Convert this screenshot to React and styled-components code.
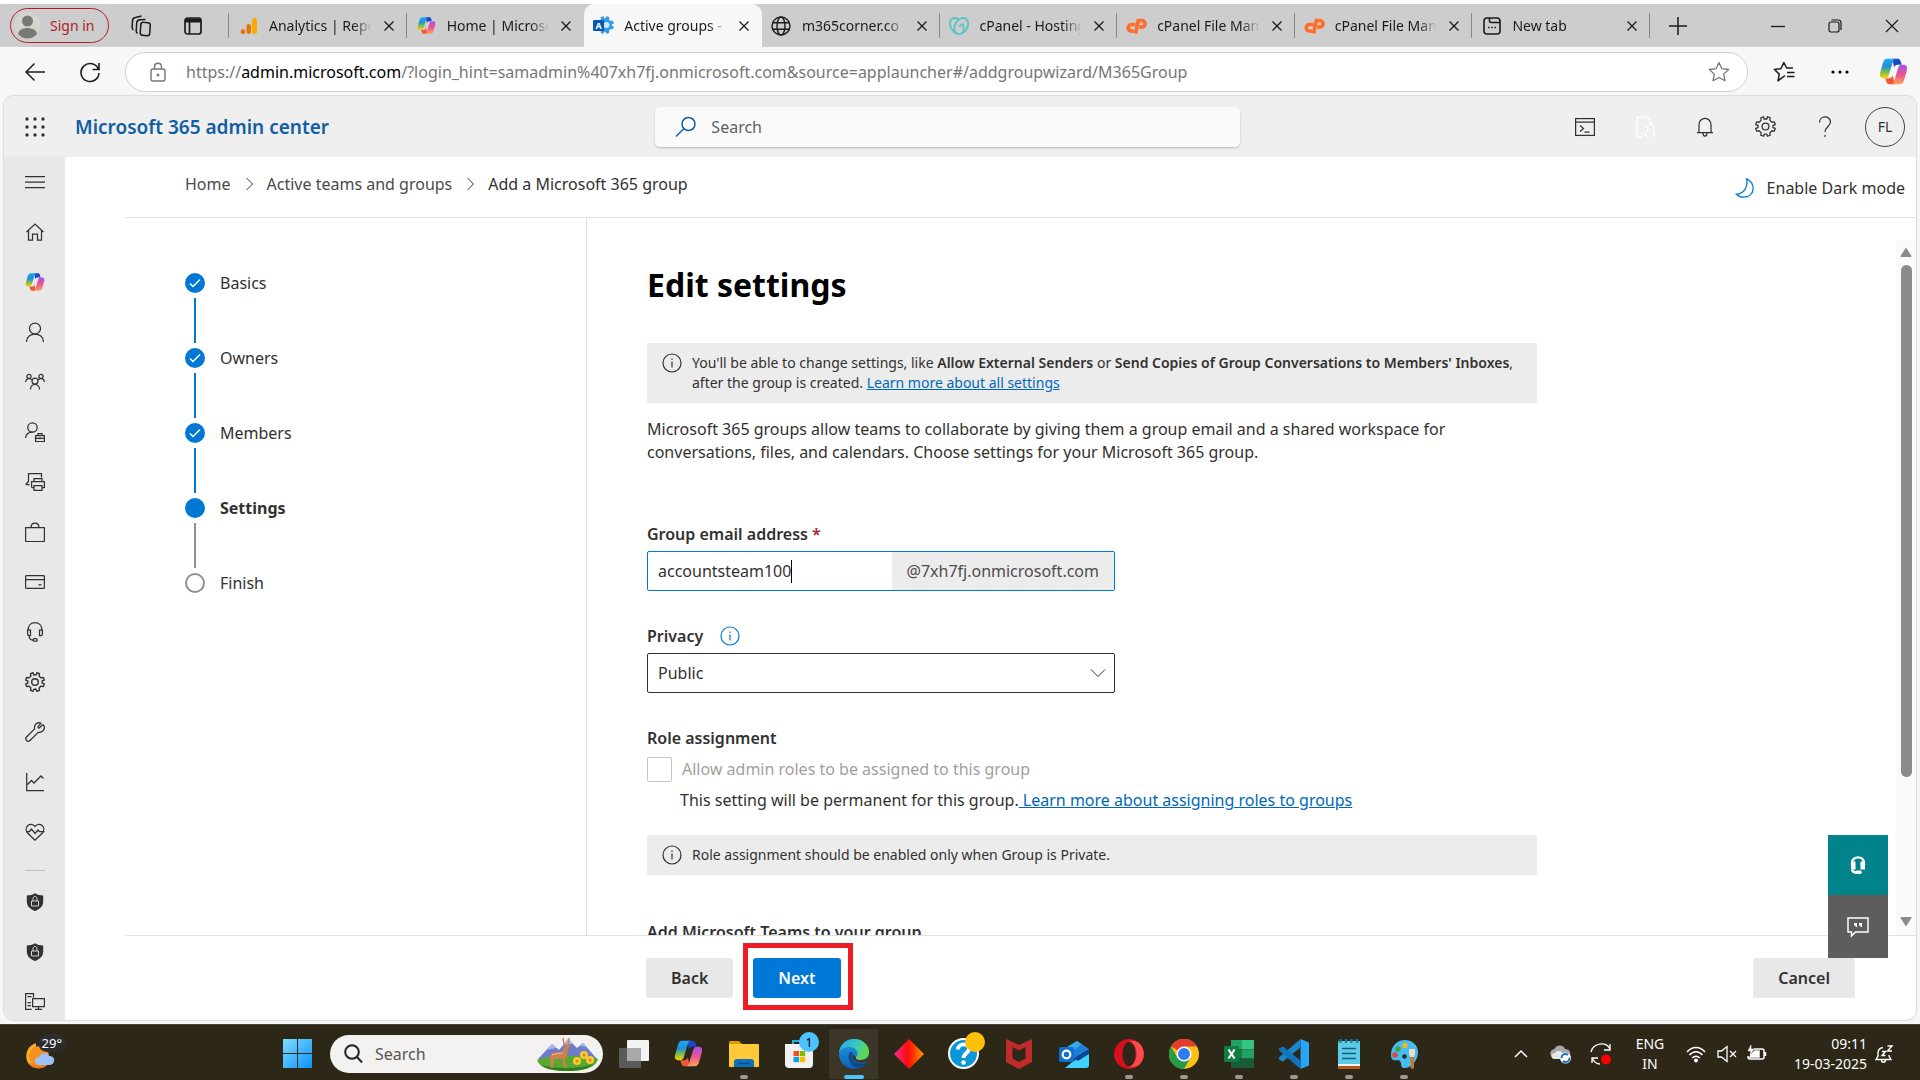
import React, { useId } from 'react';
import styled, { createGlobalStyle, css } from 'styled-components';
import { SiGodaddy } from 'react-icons/si';

const GlobalStyle = createGlobalStyle`
  * { box-sizing: border-box; }
  body {
    margin: 0;
    background: #f7f7f7;
    color: #323130;
    font-family: 'Noto Sans', 'Open Sans', sans-serif;
    font-size: 16px;
  }
  button, input, select { font: inherit; color: inherit; }
  svg { display: block; flex: none; }
  h1, p, ol, ul { margin: 0; padding: 0; }
`;

/* ---------- icons ---------- */

const Line = ({ size = 20, w = 1.25, box = 20, children, ...rest }) => (
  <svg width={size} height={size} viewBox={`0 0 ${box} ${box}`} fill="none" stroke="currentColor" strokeWidth={w} aria-hidden="true" {...rest}>
    {children}
  </svg>
);

const Art = ({ size = 28, box = 28, children }) => (
  <svg width={size} height={size} viewBox={`0 0 ${box} ${box}`} aria-hidden="true">{children}</svg>
);

const CopilotIcon = ({ size = 20 }) => {
  const id = useId().replace(/[^a-zA-Z0-9]/g, '');
  return (
    <Art size={size} box={24}>
      <defs>
        <linearGradient id={`${id}a`} x1="0" y1="0" x2="0" y2="1">
          <stop offset="0" stopColor="#21a7f0" />
          <stop offset=".4" stopColor="#1f8fd8" />
          <stop offset=".65" stopColor="#6cbb5a" />
          <stop offset="1" stopColor="#ffd000" />
        </linearGradient>
        <linearGradient id={`${id}b`} x1="0" y1="0" x2="0" y2="1">
          <stop offset="0" stopColor="#a64ff0" />
          <stop offset=".5" stopColor="#e9568d" />
          <stop offset="1" stopColor="#ffa15c" />
        </linearGradient>
      </defs>
      <path d="M11 1.500h4.500c1.300 0 2 .8 2.400 2l.9 3h-3.500c-1.500 0-2.300.8-2.800 2.300z" fill="#1a49c8" />
      <path d="M13 22.500H8.500c-1.300 0-2-.8-2.400-2l-.9-3h3.500c1.500 0 2.300-.8 2.800-2.300z" fill="#f1573a" />
      <path d="M6.800 1.500H14c-1.400 0-2 1-2.500 2.500L8.300 14.500c-.7 2.100-1.500 3-3.300 3H3.800C.9 17.500.2 15.400 1 12.800l2.300-8C4 2.500 5 1.500 6.800 1.500z" fill={`url(#${id}a)`} />
      <path d="M17.200 22.500H10c1.400 0 2-1 2.500-2.500l3.200-10.500c.7-2.100 1.500-3 3.300-3h1.200c2.900 0 3.600 2.100 2.800 4.700l-2.300 8c-.7 2.300-1.700 3.300-3.500 3.300z" fill={`url(#${id}b)`} />
    </Art>
  );
};

const CpanelIcon = () => (
  <Line size={21} box={21} w={3.6} stroke="#ff6c2c">
    <path d="M9.500 9.500H5.500a3.200 3.200 0 000 6.600h2.300" />
    <path d="M9.500 18.500L12.300 5.500h3.500a3.300 3.300 0 010 6.600h-2.500" />
  </Line>
);

const GEAR = 'M8.300 1.500l.5 2 1.200-.2 1.200.2.5-2 2.400.9-.4 2.100 1.800 1.800 2.100-.4.900 2.400-2 .7v2l2 .7-.900 2.400-2.100-.4-1.800 1.800.4 2.100-2.400.9-.7-1.900h-2l-.7 1.900-2.400-.9.400-2.100-1.800-1.800-2.100.4-.9-2.400 2-.7V9l-2-.7.9-2.400 2.100.4 1.800-1.800-.4-2.100z';

const GearIcon = (props) => (
  <Line {...props} strokeLinejoin="round"><path d={GEAR} /><circle cx="10" cy="10" r="3" /></Line>
);

const InfoIcon = ({ size = 20 }) => (
  <Line size={size} w={1.2}>
    <circle cx="10" cy="10" r="9" />
    <path d="M10 8.500v6" /><path d="M10 5.500v1.400" />
  </Line>
);

const CloseIcon = ({ size = 12 }) => (
  <Line size={size} box={12} w={1.3}><path d="M1.500 1.500l9 9M10.500 1.500l-9 9" /></Line>
);

const ChevronIcon = () => <Line size={14} box={14} w={1}><path d="M4.500 1l6 6-6 6" /></Line>;

const ShieldLock = () => (
  <Art size={20} box={20}>
    <path d="M10 1.200c2.400 1.600 5 2.200 8.200 2.300v5.700c0 4.700-3 7.800-8.200 9.800-5.200-2-8.200-5.100-8.200-9.800V3.500C5 3.400 7.600 2.800 10 1.200z" fill="#323130" />
    <path d="M6.500 9h7v5h-7zM8 9V6.800c0-3.200 4-3.200 4 0V9" fill="none" stroke="#e8e8e8" strokeWidth=".9" />
  </Art>
);

const navIcons = [
  ['Home', <Line><path d="M1.500 10L10 2l8.500 8M3.500 8.500V18h4v-6h5v6h4V8.500" /></Line>],
  ['Copilot', <CopilotIcon />],
  ['Users', <Line><circle cx="10" cy="6.500" r="5.500" /><path d="M1.500 20c0-10.500 17-10.500 17 0" /></Line>],
  ['Teams & groups', <Line><circle cx="10" cy="9" r="3" /><circle cx="4" cy="4.500" r="2.100" /><circle cx="16" cy="4.500" r="2.100" /><path d="M5.500 17.500c0-7 9-7 9 0M.6 10c0-4 4.400-4.500 6.200-1.800M19.400 10c0-4-4.400-4.500-6.200-1.800" /></Line>],
  ['Roles', <Line><circle cx="7.500" cy="5.500" r="4.700" /><path d="M.6 16c.4-4.200 3.500-6 7-6M10.600 13.500h8.800v6h-8.800zM13 13.500v-2h4v2M10.600 16.300h8.800M15 15.300v2" /></Line>],
  ['Devices', <Line><path d="M3.500 10.500V1.600h13v4M.6 12.500h4M.6 12.500l2.900-3M9 9V6.600h8V9M6.600 15.500V9.500h12.800v6h-2.500M9 13.500h8v4.900H9zM6.600 15.500H9" /></Line>],
  ['Marketplace', <Line><path d="M.6 5.600h18.800v12.900a1 1 0 01-1 1H1.600a1 1 0 01-1-1zM6 5.600c0-6 8-6 8 0" /></Line>],
  ['Billing', <Line><rect x=".6" y="3.600" width="18.800" height="12.800" rx="1" /><path d="M.6 7.500h18.800M13.500 12.800h3" /></Line>],
  ['Support', <Line><path d="M3 8.500C3 3.500 6 .7 10 .7s7 2.800 7 7.800M2.600 8h2.900v5.500H4.200a1.600 1.600 0 01-1.600-1.600zM17.400 8h-2.900v5.500h1.300a1.600 1.600 0 001.600-1.600zM4 13.500c0 3.500 1.500 4.500 4 4.500" /><rect x="8" y="16.600" width="4.300" height="2.600" rx="1.300" /></Line>],
  ['Settings', <GearIcon size={22} />],
  ['Setup', <Line strokeLinejoin="round"><path d="M17.500 2.700L14 6.200l-1.200-1.400L16 1.200C12.500-.3 8.800 2.500 9.600 6.900L1.500 15c-2 2.500 1 5.700 3.500 3.500l8.200-8.100c4.500.7 7.300-3.500 5.600-7z" /></Line>],
  ['Reports', <Line><path d="M1.700 1v17.500H19M2.500 12.500l4-4 2.500 2.500L16 4l2.500 2.500" /></Line>],
  ['Health', <Line><path d="M10 18.200L2.600 11C-2 5.500 5.500-1.200 10 4.400c4.500-5.600 12 1.100 7.400 6.600zM1 9.500h3.500l2-2.500 3.500 4.500 3-3.500 1.500 1.500h5" /></Line>],
];

/* ---------- browser chrome ---------- */

const Screen = styled.div`
  display: flex;
  flex-direction: column;
  height: 100vh;
  border-top: 4px solid #fff;
`;

const IconButton = styled.button`
  display: grid;
  place-items: center;
  width: ${(p) => p.$w || 32}px;
  height: 40px;
  padding: 0;
  border: 0;
  background: none;
  color: ${(p) => p.$color || 'inherit'};
`;

const divider = css`
  background: linear-gradient(#888, #888) right center / 1px 25px no-repeat;
`;

const TabStrip = styled.div`
  display: flex;
  align-items: center;
  height: 43px;
  padding-left: 10px;
  background: #cdcdcd;
  color: #1b1b1b;
`;

const SignIn = styled.button`
  display: flex;
  align-items: center;
  gap: 9px;
  width: 99px;
  height: 35px;
  padding: 0 3px;
  border: 1px solid #b01e24;
  border-radius: 18px;
  background: none;
  color: #b01e24;
  font-size: 14px;
`;

const StripTools = styled.div`
  display: flex;
  justify-content: center;
  gap: 20px;
  width: 120px;
  padding-right: 4px;
  ${divider}
`;

const Tabs = styled.div`
  display: grid;
  grid-template-columns: repeat(8, minmax(0, 1fr));
  flex: 0 1 1421px;
  align-self: stretch;
`;

const Tab = styled.div`
  display: flex;
  align-items: center;
  gap: 10px;
  min-width: 0;
  padding: 0 11px 0 9px;
  font-size: 14px;
  ${(p) => p.$divider && divider}
  ${(p) => p.$active && css`
    border-radius: 10px 10px 0 0;
    background: #f7f7f7;
  `}
`;

const TabIcon = styled.span`
  display: grid;
  flex: none;
  place-items: center;
  width: 21px;
`;

const TabTitle = styled.span`
  flex: 1;
  overflow: hidden;
  white-space: nowrap;
  mask-image: linear-gradient(90deg, #000 82%, transparent);
`;

const TabClose = styled.button`
  display: grid;
  place-items: center;
  width: 14px;
  height: 20px;
  padding: 0;
  border: 0;
  background: none;
`;

const WindowControls = styled.div`
  display: flex;
  margin-left: auto;
`;

const AddressRow = styled.div`
  display: flex;
  align-items: center;
  height: 49px;
  padding: 0 2px 0 7px;
  color: #1b1b1b;
`;

const AddressBar = styled.div`
  display: flex;
  align-items: center;
  flex: 1;
  gap: 18px;
  height: 40px;
  margin: 0 8px;
  padding: 0 12px 0 22px;
  border: 1px solid #cfcfcf;
  border-radius: 20px;
  background: #fff;
  color: #767676;
  b { font-weight: 400; color: #000; }
`;

const Url = styled.div`
  flex: 1;
  overflow: hidden;
  white-space: nowrap;
`;

const tabs = [
  {
    title: 'Analytics | Repo',
    icon: <Art size={18} box={18}><rect x="12" y="1" width="5" height="16" rx="2.500" fill="#f9ab00" /><rect x="6.500" y="7" width="4.500" height="10" rx="2.200" fill="#e37400" /><circle cx="3" cy="14.700" r="2.400" fill="#e8710a" /></Art>,
    divider: true,
  },
  { title: 'Home | Microso', icon: <CopilotIcon size={19} /> },
  {
    title: 'Active groups -',
    active: true,
    icon: (
      <Art size={21} box={21}>
        <g transform="translate(2 0)" fill="#2b9fe6" stroke="#1c78cf" strokeWidth=".5"><path d={GEAR} /></g>
        <circle cx="13.500" cy="10" r="3" fill="#cfe9fa" />
        <rect x="0" y="5" width="11" height="11" rx="1" fill="#0b58b4" />
        <text x="5.500" y="14" fontSize="9" fontWeight="700" textAnchor="middle" fill="#fff">A</text>
      </Art>
    ),
  },
  {
    title: 'm365corner.co',
    divider: true,
    icon: <Line w={1.4}><circle cx="10" cy="10" r="9" /><ellipse cx="10" cy="10" rx="4" ry="9" /><path d="M1.800 6.800h16.400M1.800 13.200h16.400" /></Line>,
  },
  { title: 'cPanel - Hosting', icon: <SiGodaddy size={20} color="#58c3c9" />, divider: true },
  { title: 'cPanel File Man', icon: <CpanelIcon />, divider: true },
  { title: 'cPanel File Man', icon: <CpanelIcon />, divider: true },
  {
    title: 'New tab',
    divider: true,
    icon: <Line size={18} box={18} w={1.6}><rect x="1" y="1" width="16" height="16" rx="3" /><path d="M6.500 1v3a1.500 1.500 0 001.500 1.500h9M5 10.500h1.500M8.300 10.500h1.500M11.500 10.500H13" /></Line>,
  },
];

function Browser() {
  return (
    <>
      <TabStrip>
        <SignIn>
          <Art size={27} box={27}>
            <circle cx="13.500" cy="13.500" r="13" fill="#d6d4cf" />
            <circle cx="13.500" cy="9" r="5.500" fill="#7b7873" />
            <path d="M4 22c1-8 18-8 19 0-5 6-14 6-19 0z" fill="#7b7873" />
          </Art>
          Sign in
        </SignIn>
        <StripTools>
          <IconButton aria-label="Workspaces">
            <Line size={22} box={22} w={1.5}>
              <rect x="10.500" y="7.500" width="9.500" height="13" rx="2.500" transform="rotate(4 15 14)" />
              <path d="M7.500 18.500c-1-.6-1.300-1.300-1.300-2.500L6.700 8a3.500 3.500 0 013.300-3.300l5.500-.2M3.500 15c-.9-.6-1.300-1.500-1.400-2.500L2.500 6A3.500 3.500 0 015.500 2.500L11.500 1" />
            </Line>
          </IconButton>
          <IconButton aria-label="Tab actions">
            <Line size={18} box={18} w={1.700}><rect x="1" y="1" width="16" height="16" rx="2.500" /><path d="M1 3.500h16" strokeWidth="4" /><path d="M5.500 5v12" /></Line>
          </IconButton>
        </StripTools>
        <Tabs>
          {tabs.map((t, i) => (
            <Tab key={i} $active={t.active} $divider={t.divider}>
              <TabIcon>{t.icon}</TabIcon>
              <TabTitle>{t.title}</TabTitle>
              <TabClose aria-label="Close tab"><CloseIcon /></TabClose>
            </Tab>
          ))}
        </Tabs>
        <IconButton $w={56} aria-label="New tab"><Line size={18} box={18} w={1.5}><path d="M9 0v18M0 9h18" /></Line></IconButton>
        <WindowControls>
          <IconButton $w={57} aria-label="Minimize"><Line size={14} box={14} w={1.3}><path d="M0 7.500h14" /></Line></IconButton>
          <IconButton $w={57} aria-label="Restore"><Line size={14} box={14} w={1.2}><rect x="1" y="3" width="10" height="10" rx="2" /><path d="M3.500 1h7A2.500 2.500 0 0113 3.500V11" /></Line></IconButton>
          <IconButton $w={57} aria-label="Close"><Line size={14} box={14} w={1.2}><path d="M1 1l12 12M13 1L1 13" /></Line></IconButton>
        </WindowControls>
      </TabStrip>
      <AddressRow>
        <IconButton $w={56} aria-label="Back"><Line size={20} w={1.5}><path d="M20 10H1M9.500 1.500L1 10l8.500 8.500" /></Line></IconButton>
        <IconButton $w={54} aria-label="Refresh"><Line size={22} box={22} w={1.600}><path d="M19.500 8.500A9 9 0 1020 12M20 2v6.500h-6.500" /></Line></IconButton>
        <AddressBar>
          <Line size={20} w={1.4}><rect x="3" y="7" width="14" height="12" rx="2" /><path d="M6.500 7V5c0-5 7-5 7 0v2" /><circle cx="10" cy="13" r=".8" fill="currentColor" /></Line>
          <Url role="textbox" aria-label="Address" tabIndex={0}>
            https://<b>admin.microsoft.com</b>/?login_hint=samadmin%407xh7fj.onmicrosoft.com&amp;source=applauncher#/addgroupwizard/M365Group
          </Url>
          <IconButton aria-label="Favorite this page"><Line size={22} box={22} w={1.3} strokeLinejoin="round"><path d="M11 1.500l2.900 6.200 6.700.8-4.900 4.600 1.300 6.700-6-3.300-6 3.300 1.300-6.700L1.400 8.500l6.700-.8z" /></Line></IconButton>
        </AddressBar>
        <IconButton $w={56} aria-label="Favorites"><Line size={22} box={22} w={1.500} strokeLinejoin="round"><path d="M12 14.500L5 19.800l1.300-6.700L1.400 8.500l6.500-.8L10.800 1.500l2.900 5.500H20M14 11.500h7.500M14 15.500h7.500" /></Line></IconButton>
        <IconButton $w={56} aria-label="More"><Art size={18} box={18}><circle cx="2" cy="9" r="1.600" /><circle cx="9" cy="9" r="1.600" /><circle cx="16" cy="9" r="1.600" /></Art></IconButton>
        <IconButton $w={50} aria-label="Copilot"><CopilotIcon size={29} /></IconButton>
      </AddressRow>
    </>
  );
}

/* ---------- admin center ---------- */

const Frame = styled.div`
  position: relative;
  display: flex;
  flex: 1;
  flex-direction: column;
  min-height: 0;
  margin: 0 4px 4px;
  overflow: hidden;
  border-radius: 10px;
  background: #fff;
  box-shadow: 0 0 1px 1px #dcdcdc;
`;

const SuiteHeader = styled.header`
  display: grid;
  grid-template-columns: 49fr 585px 50fr;
  align-items: center;
  height: 61px;
  padding-right: 11px;
  background: #efefef;
`;

const Brand = styled.div`
  display: flex;
  align-items: center;
  gap: 9px;
  a {
    color: #115ea3;
    font-size: 19px;
    font-weight: 600;
    text-decoration: none;
  }
`;

const SearchBox = styled.label`
  display: flex;
  align-items: center;
  gap: 12px;
  height: 40px;
  padding: 0 20px;
  border-radius: 5px;
  background: #fafafa;
  box-shadow: 0 1px 2px #b8b8b8;
  color: #115ea3;
  input {
    flex: 1;
    border: 0;
    outline: 0;
    background: none;
    color: #616161;
  }
  input::placeholder { color: #616161; opacity: 1; }
`;

const HeaderTools = styled.div`
  display: flex;
  justify-content: flex-end;
  align-items: center;
`;

const Avatar = styled.button`
  width: 40px;
  height: 40px;
  margin-left: 10px;
  padding: 0;
  border: 1px solid #424242;
  border-radius: 50%;
  background: none;
  font-size: 14px;
`;

const Body = styled.div`
  display: flex;
  flex: 1;
  min-height: 0;
`;

const Sidebar = styled.nav`
  flex: none;
  width: 61px;
  overflow: hidden;
  background: #e8e8e8;
`;

const NavItem = styled.button`
  display: grid;
  place-items: center;
  width: 100%;
  height: 50px;
  padding: 0;
  border: 0;
  background: none;
`;

const NavDivider = styled.hr`
  width: 20px;
  height: 1px;
  margin: 13px auto 6px;
  border: 0;
  background: #c0c0c0;
`;

const Main = styled.main`
  display: flex;
  flex: 1;
  flex-direction: column;
  min-width: 0;
  padding-left: 60px;
`;

const TopRow = styled.div`
  display: flex;
  justify-content: space-between;
  height: 61px;
  padding: 15px 11px 0 60px;
  border-bottom: 1px solid #e1e1e1;
`;

const Breadcrumb = styled.nav`
  display: flex;
  align-items: center;
  gap: 11px;
  height: 24px;
  a { color: #4a4a4a; text-decoration: none; }
`;

const DarkToggle = styled.button`
  display: flex;
  align-items: center;
  gap: 12px;
  height: 32px;
  padding: 0;
  border: 0;
  background: none;
`;

const Wizard = styled.div`
  display: flex;
  flex: 1;
  min-height: 0;
`;

const Steps = styled.ol`
  flex: none;
  width: 462px;
  padding: 55px 0 0 60px;
  border-right: 1px solid #e1e1e1;
  list-style: none;
`;

const Step = styled.li`
  display: grid;
  grid-template-columns: 20px 1fr;
  grid-template-rows: 20px 45px;
  gap: 5px 15px;
  align-items: center;
  margin-bottom: 5px;
  font-weight: ${(p) => (p.$current ? 700 : 400)};
  &::after {
    content: '';
    justify-self: center;
    width: 2px;
    height: 100%;
    background: ${(p) => (p.$last ? 'none' : p.$done ? '#0078d4' : '#8f8f8f')};
  }
`;

const Content = styled.div`
  flex: 1;
  min-width: 0;
  overflow: hidden;
  padding: 43px 0 0 60px;
`;

const Title = styled.h1`
  color: #000;
  font-size: 32px;
  font-weight: 700;
  line-height: 48px;
`;

const Notice = styled.div`
  display: flex;
  gap: 10px;
  max-width: 890px;
  margin-top: ${(p) => p.$top}px;
  padding: 10px 15px;
  background: #ececec;
  font-size: 14px;
  line-height: 20px;
  white-space: nowrap;
  b { font-weight: 600; }
`;

const Link = styled.a`
  color: #0068b8;
  text-decoration: underline;
`;

const Intro = styled.p`
  max-width: 870px;
  margin-top: 15px;
  line-height: 23px;
`;

const Label = styled.label`
  display: block;
  font-weight: 600;
  line-height: 20px;
`;

const Required = styled.span`
  color: #a4262c;
`;

const Field = styled.div`
  display: flex;
  flex-direction: column;
  gap: 7px;
  max-width: 468px;
  margin-top: ${(p) => p.$top}px;
`;

const LabelRow = styled.div`
  display: flex;
  align-items: center;
  gap: 17px;
  color: #0078d4;
  label { color: #323130; }
`;

const EmailBox = styled.div`
  display: flex;
  height: 40px;
  border: 1px solid #0078d4;
  border-radius: 2px;
`;

const EmailName = styled.div`
  display: flex;
  align-items: center;
  flex: 1;
  padding-left: 10px;
  input {
    field-sizing: content;
    padding: 0;
    border: 0;
    outline: 0;
    background: none;
    caret-color: transparent;
  }
`;

const Caret = styled.span`
  width: 1px;
  height: 23px;
  background: #000;
`;

const Suffix = styled.span`
  padding: 0 15px;
  background: #ececec;
  color: #4f4d4b;
  line-height: 38px;
`;

const SelectBox = styled.div`
  display: grid;
  align-items: center;
  select, svg { grid-area: 1 / 1; }
  select {
    appearance: none;
    width: 100%;
    height: 40px;
    padding: 0 10px;
    border: 1px solid #323130;
    border-radius: 2px;
    background: #fff;
  }
  svg {
    justify-self: end;
    margin-right: 9px;
    pointer-events: none;
  }
`;

const CheckRow = styled.label`
  display: flex;
  align-items: center;
  gap: 10px;
  height: 26px;
  margin-top: 8px;
  color: #a19f9d;
  input {
    appearance: none;
    width: 25px;
    height: 25px;
    margin: 0;
    border: 1px solid #c8c6c4;
    border-radius: 2px;
  }
`;

const Hint = styled.p`
  margin-top: 6px;
  padding-left: 33px;
  line-height: 24px;
`;

const Scrollbar = styled.div`
  display: flex;
  flex-direction: column;
  align-items: center;
  gap: 7px;
  width: 20px;
  margin-top: 22px;
  padding: 6px 0 7px;
  background: #fafafa;
`;

const Thumb = styled.div`
  flex: 0 0 75%;
  width: 11px;
  margin-bottom: auto;
  border-radius: 6px;
  background: #8b8b8b;
`;

const Footer = styled.footer`
  display: flex;
  align-items: center;
  height: 85px;
  padding: 0 61px 0 521px;
  border-top: 1px solid #e1e1e1;
`;

const Highlight = styled.div`
  margin: 0 auto 3px 10px;
  padding: 10px 7px 7px 5px;
  border: 5px solid #ee1c25;
`;

const Button = styled.button`
  display: block;
  height: 40px;
  padding: 0 25px;
  border: 0;
  border-radius: 3px;
  background: ${(p) => (p.$primary ? '#0078d7' : '#e8e8e8')};
  color: ${(p) => (p.$primary ? '#fff' : '#323130')};
  font-weight: 600;
`;

const FloatingTools = styled.div`
  position: absolute;
  right: 28px;
  bottom: 62px;
  width: 60px;
`;

const FloatButton = styled.button`
  display: grid;
  place-items: center;
  width: 100%;
  height: ${(p) => (p.$help ? 60 : 63)}px;
  padding: 0;
  border: 0;
  background: ${(p) => (p.$help ? '#00838a' : '#5f5d5c')};
  color: #fff;
`;

const steps = [
  { name: 'Basics', done: true },
  { name: 'Owners', done: true },
  { name: 'Members', done: true },
  { name: 'Settings', current: true },
  { name: 'Finish' },
];

const StepDot = ({ done, current }) => (
  <Art size={20} box={20}>
    {done || current ? <circle cx="10" cy="10" r="10" fill="#0078d4" /> : <circle cx="10" cy="10" r="9" fill="#fff" stroke="#8f8f8f" strokeWidth="2" />}
    {done && <path d="M5 10.500l3 3L15 6.500" fill="none" stroke="#fff" strokeWidth="1.500" />}
  </Art>
);

function AdminHeader() {
  return (
    <SuiteHeader>
      <Brand>
        <IconButton $w={62} aria-label="App launcher">
          <Art size={20} box={20}>
            {[2, 10, 18].map((y) => [2, 10, 18].map((x) => <circle key={`${x}-${y}`} cx={x} cy={y} r="1.700" fill="#323130" />))}
          </Art>
        </IconButton>
        <a href="#home">Microsoft 365 admin center</a>
      </Brand>
      <SearchBox>
        <Line size={22} box={22} w={1.500}><circle cx="13.500" cy="8" r="6.500" /><path d="M9 12.500L1 20.500" /></Line>
        <input type="text" placeholder="Search" aria-label="Search" />
      </SearchBox>
      <HeaderTools>
        <IconButton $w={60} aria-label="Cloud shell"><Line size={20}><rect x=".6" y="1.600" width="18.800" height="16.800" /><path d="M.6 5h18.800M5 8.500l3.500 3-3.500 3M9.500 15h5" /></Line></IconButton>
        <IconButton $w={60} $color="#fff" aria-label="Get mobile app"><Line size={22} box={22}><path d="M9 21H3V1h10l3 3v6M7 18h2M16 6c3 3 4 5 4 9v6M10 12l4-2v4l-3 3 2 4" /></Line></IconButton>
        <IconButton $w={60} aria-label="Notifications"><Line size={20}><path d="M4 15.500V8c0-9 12-9 12 0v7.500M2 15.500h16M8 16c0 4 4 4 4 0" /></Line></IconButton>
        <IconButton $w={60} aria-label="Settings"><GearIcon size={23} w={1.1} /></IconButton>
        <IconButton $w={60} aria-label="Help"><Line size={22} box={22}><path d="M5.500 6.500C5.500-.8 16.500-.8 16.500 6c0 4.500-5.500 4.500-5.500 10M11 19v2" /></Line></IconButton>
        <Avatar>FL</Avatar>
      </HeaderTools>
    </SuiteHeader>
  );
}

function SettingsForm() {
  return (
    <Content>
      <Title>Edit settings</Title>
      <Notice $top={34}>
        <InfoIcon />
        <p>
          You'll be able to change settings, like <b>Allow External Senders</b> or <b>Send Copies of Group Conversations to Members' Inboxes</b>,
          <br />
          after the group is created. <Link href="#settings">Learn more about all settings</Link>
        </p>
      </Notice>
      <Intro>
        Microsoft 365 groups allow teams to collaborate by giving them a group email and a shared workspace for
        <br />
        conversations, files, and calendars. Choose settings for your Microsoft 365 group.
      </Intro>
      <Field $top={60}>
        <Label htmlFor="email">Group email address <Required>*</Required></Label>
        <EmailBox>
          <EmailName><input id="email" type="text" defaultValue="accountsteam100" /><Caret /></EmailName>
          <Suffix>@7xh7fj.onmicrosoft.com</Suffix>
        </EmailBox>
      </Field>
      <Field $top={35}>
        <LabelRow>
          <Label htmlFor="privacy">Privacy</Label>
          <InfoIcon />
        </LabelRow>
        <SelectBox>
          <select id="privacy" defaultValue="Public">
            <option>Public</option>
            <option>Private</option>
          </select>
          <Line size={16} box={16} w={1}><path d="M1 4.500l7 7 7-7" /></Line>
        </SelectBox>
      </Field>
      <Field $top={35}>
        <Label as="div">Role assignment</Label>
      </Field>
      <CheckRow>
        <input type="checkbox" disabled />
        Allow admin roles to be assigned to this group
      </CheckRow>
      <Hint>This setting will be permanent for this group.<Link href="#roles"> Learn more about assigning roles to groups</Link></Hint>
      <Notice $top={23}>
        <InfoIcon />
        <p>Role assignment should be enabled only when Group is Private.</p>
      </Notice>
      <Field $top={47}>
        <Label as="div">Add Microsoft Teams to your group</Label>
      </Field>
    </Content>
  );
}

function AdminCenter() {
  return (
    <Frame>
      <AdminHeader />
      <Body>
        <Sidebar>
          <NavItem aria-label="Menu"><Line><path d="M0 4.500h20M0 10h20M0 15.500h20" /></Line></NavItem>
          {navIcons.map(([name, icon]) => <NavItem key={name} aria-label={name}>{icon}</NavItem>)}
          <NavDivider />
          <NavItem aria-label="Security"><ShieldLock /></NavItem>
          <NavItem aria-label="Compliance"><ShieldLock /></NavItem>
          <NavItem aria-label="Endpoint Manager">
            <Line><path d="M8.500 5.500V1.600H.6v15.800h6M2.500 4.500h4M2.500 10.500H6M2.500 13.500H6M7.600 6.600h11.800v8H7.600zM13.500 14.600v2.800M10 17.400h7" /></Line>
          </NavItem>
        </Sidebar>
        <Main>
          <TopRow>
            <Breadcrumb aria-label="Breadcrumb">
              <a href="#home">Home</a><ChevronIcon />
              <a href="#groups">Active teams and groups</a><ChevronIcon />
              <span>Add a Microsoft 365 group</span>
            </Breadcrumb>
            <DarkToggle>
              <Line size={20} stroke="#0078d4"><path d="M11.500.8c9.500 3.500 9 18.400-3 18.400-3 0-5.500-1.200-7.300-3.200C9 16 13.500 8.500 11.500.8z" /></Line>
              Enable Dark mode
            </DarkToggle>
          </TopRow>
          <Wizard>
            <Steps>
              {steps.map((s, i) => (
                <Step key={s.name} $done={s.done} $current={s.current} $last={i === steps.length - 1}>
                  <StepDot {...s} />
                  <span>{s.name}</span>
                </Step>
              ))}
            </Steps>
            <SettingsForm />
            <Scrollbar>
              <Art size={12} box={12}><path d="M6 1.500L11.500 10a.8.8 0 01-.8 1H1.300a.8.8 0 01-.8-1z" fill="#8b8b8b" /></Art>
              <Thumb />
              <Art size={12} box={12}><path d="M6 10.500L.5 2a.8.8 0 01.8-1h9.400a.8.8 0 01.8 1z" fill="#8b8b8b" /></Art>
            </Scrollbar>
          </Wizard>
          <Footer>
            <Button>Back</Button>
            <Highlight><Button $primary>Next</Button></Highlight>
            <Button>Cancel</Button>
          </Footer>
        </Main>
      </Body>
      <FloatingTools>
        <FloatButton $help aria-label="Help and support">
          <Line size={20} w={2.400}>
            <path d="M4 10V8c0-7.500 12-7.500 12 0v2" />
            <path d="M4 14.500c.5 2.500 2 3 4 3h3.500" />
            <rect x="4" y="7.500" width="2.500" height="6" fill="#fff" strokeWidth="2" />
            <rect x="13.500" y="7.500" width="2.500" height="6" fill="#fff" strokeWidth="2" />
            <path d="M8.500 17.200h3.500" strokeWidth="3.500" strokeLinecap="round" />
          </Line>
        </FloatButton>
        <FloatButton aria-label="Give feedback">
          <Line size={22} box={22} w={1.500}>
            <path d="M1 2h20v14H8.500L4.500 20v-4H1z" />
            <path d="M7 7h3v4H8.500V9.500H7zM12 7h3v4h-1.500V9.500H12z" fill="#fff" stroke="none" />
          </Line>
        </FloatButton>
      </FloatingTools>
    </Frame>
  );
}

/* ---------- taskbar ---------- */

const Bar = styled.div`
  display: flex;
  align-items: center;
  height: 56px;
  padding: 2px 20px 0 24px;
  border-top: 1px solid #45423a;
  background: #2d2718;
  color: #fff;
`;

const Weather = styled.button`
  display: grid;
  width: 42px;
  height: 40px;
  margin-right: 207px;
  padding: 0;
  border: 0;
  background: none;
  svg, span { grid-area: 1 / 1; }
  span {
    align-self: start;
    justify-self: end;
    padding: 0 4px;
    border-radius: 10px;
    background: #2c2c2e;
    font-size: 13px;
    line-height: 18px;
  }
`;

const TaskSearch = styled.label`
  display: flex;
  align-items: center;
  gap: 12px;
  width: 273px;
  height: 38px;
  margin: 0 3px 0 9px;
  padding: 0 5px 0 14px;
  border-radius: 19px;
  background: #f4f2f0;
  color: #222;
  input {
    flex: 1;
    min-width: 0;
    padding: 0;
    border: 0;
    background: none;
  }
  input::placeholder { color: #555; opacity: 1; }
`;

const TaskItem = styled.button`
  position: relative;
  display: grid;
  place-items: center;
  flex: none;
  width: ${(p) => p.$w || 55}px;
  height: 50px;
  padding: 0;
  border: 0;
  border-radius: 6px;
  background: ${(p) => (p.$active ? 'linear-gradient(90deg, transparent 3px, #3b3628 3px, #3b3628 52px, transparent 52px)' : 'none')};
  &::after {
    content: '';
    display: ${(p) => (p.$running ? 'block' : 'none')};
    position: absolute;
    bottom: 0;
    width: ${(p) => (p.$active ? 20 : 8)}px;
    height: 4px;
    border-radius: 2px;
    background: ${(p) => (p.$active ? '#4cc2ff' : '#9d9a93')};
  }
`;

const Badge = styled.span`
  position: absolute;
  top: 3px;
  right: ${(p) => (p.$blank ? 6 : 7)}px;
  width: 20px;
  height: 20px;
  border-radius: 50%;
  background: ${(p) => (p.$blank ? '#ffc107' : '#4cc2ff')};
  color: #000;
  font-size: 13px;
  line-height: 20px;
`;

const Tray = styled.div`
  display: flex;
  align-items: center;
  margin-left: auto;
  font-size: 14px;
  line-height: 20px;
  text-align: center;
`;

const TrayItem = styled.button`
  display: grid;
  place-items: center;
  width: ${(p) => p.$w}px;
  height: 40px;
  padding: 0;
  border: 0;
  background: none;
`;

const Clock = styled.div`
  width: 94px;
  text-align: right;
`;

const apps = [
  { name: 'Task view', icon: <Art size={30} box={30}><rect x="0" y="9" width="22" height="20" rx="1" fill="#5a5a5a" /><rect x="8" y="1" width="22" height="21" rx="1" fill="#f3f3f3" /><rect x="8" y="9" width="14" height="13" fill="#a8a8a8" /></Art> },
  { name: 'Copilot', icon: <CopilotIcon size={29} /> },
  { name: 'File Explorer', running: true, icon: <Art size={30} box={30}><path d="M0 3.500A1.500 1.500 0 011.500 2H10l3 3h15v8H0z" fill="#e09a00" /><rect x="0" y="5" width="30" height="23" rx="1" fill="#ffca3a" /><path d="M5 28v-5a3 3 0 013-3h14a3 3 0 013 3v5z" fill="#0d70bd" /><path d="M9 24.500h12" stroke="#0a4c86" strokeWidth="1.500" /></Art> },
  { name: 'Store', badge: '1', icon: <Art size={30} box={30}><path d="M9 6V2h11" fill="none" stroke="#2fa8ea" strokeWidth="2" /><path d="M1 5h28v20a4 4 0 01-4 4H5a4 4 0 01-4-4z" fill="#f2f2f2" /><path d="M9.500 12H15v5.200H9.500z" fill="#f25022" /><path d="M15.700 12h5.400v5.200h-5.400z" fill="#7fba00" /><path d="M9.500 18H15v5.200H9.500z" fill="#00a4ef" /><path d="M15.700 18h5.400v5.200h-5.400z" fill="#ffb900" /></Art> },
  {
    name: 'Edge', running: true, active: true,
    icon: (
      <Art size={30} box={30}>
        <defs>
          <linearGradient id="edgeTop" x1="0" y1="0" x2="1" y2=".4"><stop offset="0" stopColor="#2aa5e8" /><stop offset=".6" stopColor="#35c9c0" /><stop offset="1" stopColor="#64d84c" /></linearGradient>
          <linearGradient id="edgeSide" x1="0" y1="0" x2="0" y2="1"><stop offset="0" stopColor="#1e9de0" /><stop offset="1" stopColor="#0e5fb4" /></linearGradient>
        </defs>
        <circle cx="15" cy="15" r="15" fill="url(#edgeSide)" />
        <path d="M0 14C1 5 7 0 15 0c9 0 15 6 15 13 0 5-4 8-8.500 8-4 0-5-1.500-4.500-2.800.6-1.200 1.500-2 1.500-4C18.500 11 15 8 10.500 8 5 8 1 11 0 14z" fill="url(#edgeTop)" />
        <path d="M11 13c-3 5-1 12 5 15 5 1.500 10-.5 12.500-5-7 3-14 .5-15.500-4.500-.5-2 0-4 1-5.500z" fill="#0c4a8e" />
        <path d="M28.500 22.500c-6 3-13 .8-15-4-.3-1-.2-2.500.3-3.500l3.200 3.200c-.5 1.300.5 2.800 4.500 2.800 3 0 6-1 8.500-4z" fill="#3b3628" />
      </Art>
    ),
  },
  {
    name: 'Diamond',
    icon: (
      <Art size={30} box={30}>
        <defs><linearGradient id="diamond"><stop offset="0" stopColor="#f0308f" /><stop offset=".45" stopColor="#ff0a10" /><stop offset=".6" stopColor="#ff2a00" /><stop offset="1" stopColor="#ff9a00" /></linearGradient></defs>
        <path d="M15 0l15 15-15 15L0 15z" fill="url(#diamond)" />
      </Art>
    ),
  },
  { name: 'Help', badge: '', icon: <Art size={31} box={31}><circle cx="15.500" cy="15.500" r="14.500" fill="#0a96d8" stroke="#fff" strokeWidth="2" /><path d="M10 11.500c0-7 11-6.500 11-.5 0 4-5.500 4-5.500 9" fill="none" stroke="#fff" strokeWidth="3.800" /><circle cx="15.500" cy="24.500" r="2.300" fill="#fff" /></Art> },
  { name: 'McAfee', icon: <Art size={30} box={30}><path d="M2 0l13 6 13-6v23l-13 7-13-7zm6.500 8v11.500l6.500 3.500 6.500-3.500V8L15 11.500z" fill="#c02b2b" fillRule="evenodd" /></Art> },
  { name: 'Outlook', icon: <Art size={30} box={30}><path d="M5 10L18 2l12 8v10H5z" fill="#1d7fd6" /><path d="M5 10L18 2l5 3.500L10 14z" fill="#3aa7ee" /><path d="M6 29h21a3 3 0 003-3V12L12 24z" fill="#40d3ff" /><path d="M15 19l15-9v5l-11 7z" fill="#0a4694" /><rect x="0" y="8" width="15" height="15" rx="2" fill="#0f6fd1" /><circle cx="7.500" cy="15.500" r="3.800" fill="none" stroke="#fff" strokeWidth="2.200" /></Art> },
  { name: 'Opera', running: true, icon: <Art size={30} box={30}><circle cx="15" cy="15" r="15" fill="#d4101e" /><path d="M15 2a15 15 0 0110 2 15 15 0 010 22 15 15 0 01-10 2c10-3 10-23 0-26z" fill="#fb4b50" /><ellipse cx="15" cy="15" rx="6.500" ry="12" fill="#2d2718" /></Art> },
  { name: 'Chrome', running: true, icon: <Art size={30} box={30}><circle cx="15" cy="15" r="15" fill="#fbc116" /><path d="M15 15L2 7.500A15 15 0 0128 7.500H15z" fill="#e33b2e" /><path d="M15 15l6.500 3.800L15 30A15 15 0 012 7.500l6.500 11.300z" fill="#269a48" /><circle cx="15" cy="15" r="7.500" fill="#fff" /><circle cx="15" cy="15" r="6" fill="#2f7cf0" /></Art> },
  { name: 'Excel', running: true, icon: <Art size={30} box={30}><path d="M7 1h11v9.300H7z" fill="#21a366" /><path d="M18 1h11a1 1 0 011 1v8.300H18z" fill="#33c481" /><path d="M7 10.300h11v9.300H7z" fill="#107c41" /><path d="M18 10.300h12v9.300H18z" fill="#21a366" /><path d="M7 19.600h23V28a1 1 0 01-1 1H7z" fill="#185c37" /><rect x="0" y="7" width="15" height="16" rx="1.500" fill="#107c41" /><path d="M4.500 10.500l6 9M10.500 10.500l-6 9" stroke="#fff" strokeWidth="2.200" /></Art> },
  { name: 'VS Code', running: true, icon: <Art size={30} box={30}><path d="M21.500 0L30 3.500v23L21.500 30z" fill="#2aa4f4" /><path d="M21.500 0v8.500L4 22.500 0 20.500v-2z" fill="#1c83cf" /><path d="M21.500 30v-8.500L4 7.500 0 9.500v2z" fill="#1374bd" /></Art> },
  { name: 'Notepad', running: true, icon: <Art size={30} box={30}><rect x="4" y="2" width="22" height="25" rx="1" fill="#5fcbe8" /><path d="M4 26h22v4H4z" fill="#b4581c" /><path d="M4 25h22v2H4z" fill="#f3f3f3" /><path d="M8 9.500h14M8 14.500h14M8 19.500h14" stroke="#0b5f7d" strokeWidth="1.700" /><path d="M6.500 0v4M12 0v4M17.500 0v4M23 0v4" stroke="#15809f" strokeWidth="2.200" /></Art> },
  { name: 'Paint', running: true, icon: <Art size={30} box={30}><path d="M16 1c8 0 13 6 13 12 0 8-6 16-14 16-4 0-2-5-4-7-3-2-9 2-9-6C2 7 8 1 16 1z" fill="#45bdf0" /><circle cx="6" cy="16" r="2.700" fill="#e2492f" /><circle cx="9" cy="10" r="2.700" fill="#45a33b" /><circle cx="16" cy="6.500" r="2.700" fill="#f4b81c" /><circle cx="15.500" cy="17.500" r="2.300" fill="#2d2718" /><path d="M21.500 17h3.500v11c0 2.500-3.500 2.500-3.500 0z" fill="#c8772c" /><path d="M20 10h6v5l-1 3h-4l-1-3z" fill="#f0dfc8" /></Art> },
];

const DeerScene = () => (
  <svg width="61" height="36" viewBox="0 0 61 36" aria-hidden="true">
    <path d="M1 23L15 8l7 6 9-11 9 9 6-5 14 16z" fill="#6d7ccb" />
    <path d="M10 14l5-6 4 4M27 8l4-5 5 5M43 10l3-3 4 4" fill="#a9b4ee" />
    <path d="M0 24c8-5 52-6 61-1-2 9-15 12-30 12S3 33 0 24z" fill="#58a831" />
    <path d="M4 29c14 4 40 4 53-1-6 5-15 7-26 7S9 33 4 29z" fill="#2f7d1d" />
    <path d="M14 18c4-3 9-1 12-3l2-6c1-2 5-1 6 1l-3 2-1 8-2 3 1 9h-2l-2-9h-8l-1 9h-2l-1-9z" fill="#cf8149" />
    <path d="M27 8l-1-6M31 8l1-6" stroke="#cf8149" strokeWidth="1.500" />
    <path d="M15 19c4-2 8-1 11-2" stroke="#efb98d" strokeWidth="1" fill="none" />
    <g fill="#ffc933"><circle cx="40" cy="25" r="4" /><circle cx="47" cy="19" r="4" /><circle cx="53" cy="24" r="4" /></g>
    <g fill="#d98a0c"><circle cx="40" cy="25" r="1.500" /><circle cx="47" cy="19" r="1.500" /><circle cx="53" cy="24" r="1.500" /></g>
  </svg>
);

function Taskbar() {
  return (
    <Bar>
      <Weather aria-label="Weather">
        <Art size={40} box={40}>
          <path d="M12 9C3 12 0 21 4 29c5 7 16 7 21 0-8 0-14-8-13-20z" fill="#f6b026" />
          <path d="M4 29c5 7 16 7 21 0-3 0-6-1-8-3-4 3-9 4-13 3z" fill="#f07a1c" />
          <circle cx="15" cy="22" r="10" fill="#f5911f" />
          <path d="M15 31a4 4 0 010-8c2-5 9-5 10-1 7-1 7 9 0 9z" fill="#9dc0f7" />
        </Art>
        <span>29°</span>
      </Weather>
      <TaskItem $w={48} aria-label="Start">
        <Art size={29} box={29}>
          <defs><linearGradient id="win" x1="0" y1="0" x2="1" y2="1"><stop offset="0" stopColor="#7fdcff" /><stop offset="1" stopColor="#0a93fb" /></linearGradient></defs>
          <path d="M0 0h14v14H0zM15 0h14v14H15zM0 15h14v14H0zM15 15h14v14H15z" fill="url(#win)" />
        </Art>
      </TaskItem>
      <TaskSearch>
        <Line size={19} box={19} w={2}><circle cx="8" cy="8" r="6.800" /><path d="M13 13l5 5.500" /></Line>
        <input type="text" placeholder="Search" aria-label="Search" />
        <DeerScene />
      </TaskSearch>
      {apps.map((a) => (
        <TaskItem key={a.name} aria-label={a.name} $running={a.running} $active={a.active}>
          {a.icon}
          {a.badge !== undefined && <Badge $blank={!a.badge}>{a.badge}</Badge>}
        </TaskItem>
      ))}
      <Tray>
        <TrayItem $w={40} aria-label="Hidden icons"><Line size={14} box={14} w={1.500}><path d="M1 10l6-6 6 6" /></Line></TrayItem>
        <TrayItem $w={40} aria-label="OneDrive">
          <Art size={22} box={22}><path d="M5 15a4.500 4.500 0 01-.5-9C7 1 14 2 15 6c4 0 6 3 5 6l-6 4z" fill="#a8a8a8" /><path d="M4 16c-4-1-3-6 1-6 3-4 8-1 9 2l-2 4z" fill="#e8e8e8" /><circle cx="15.500" cy="15" r="5.500" fill="#fff" /><circle cx="15.500" cy="15" r="4" fill="none" stroke="#1a6fc4" strokeWidth="2" strokeDasharray="9 3" /></Art>
        </TrayItem>
        <TrayItem $w={40} aria-label="Windows Update">
          <Line size={22} box={22} w={1.300}><path d="M1 9c2-9 15-11 19-3M20 1v6h-6M2 20v-5h6M2 15c2 4 5 6 8 6" /><circle cx="16" cy="16.500" r="5" fill="#f00" stroke="none" /></Line>
        </TrayItem>
        <TrayItem $w={58}><span>ENG<br />IN</span></TrayItem>
        <TrayItem $w={34} aria-label="Wi-Fi"><Line size={20} w={1.500}><path d="M1 8c5-6 13-6 18 0M3.500 11c4-4.500 9-4.500 13 0M6.300 14c2-2.500 5.400-2.500 7.400 0" /><circle cx="10" cy="16.500" r="1.200" fill="currentColor" /></Line></TrayItem>
        <TrayItem $w={28} aria-label="Volume muted"><Line size={20} w={1.300}><path d="M1 7h3.500L10 2.500v15L4.500 13H1zM13 7l6 6M19 7l-6 6" /></Line></TrayItem>
        <TrayItem $w={32} aria-label="Battery"><Line size={20} w={1.500}><path d="M7 5h8a2 2 0 012 2v6a2 2 0 01-2 2H3a2 2 0 01-2-2v-1M18.500 8v4" /><path d="M8 7h4v6H3l2-3z" fill="currentColor" /><path d="M4 1L1 7h3l-1 4 4-6H4z" fill="currentColor" strokeWidth=".5" /></Line></TrayItem>
        <Clock>09:11<br />19-03-2025</Clock>
        <TrayItem $w={33} aria-label="Notifications"><Line size={20} w={1.400}><path d="M9 3.500C5 4 4 6 4 9v3l-2 3.500h15L15 12v-1M7.500 16c0 3 4 3 4 0M8 7.500h3.500L8 11.500h3.500M13.500 2H18l-4.500 5H18" /></Line></TrayItem>
      </Tray>
    </Bar>
  );
}

export default function App() {
  return (
    <Screen>
      <GlobalStyle />
      <Browser />
      <AdminCenter />
      <Taskbar />
    </Screen>
  );
}
